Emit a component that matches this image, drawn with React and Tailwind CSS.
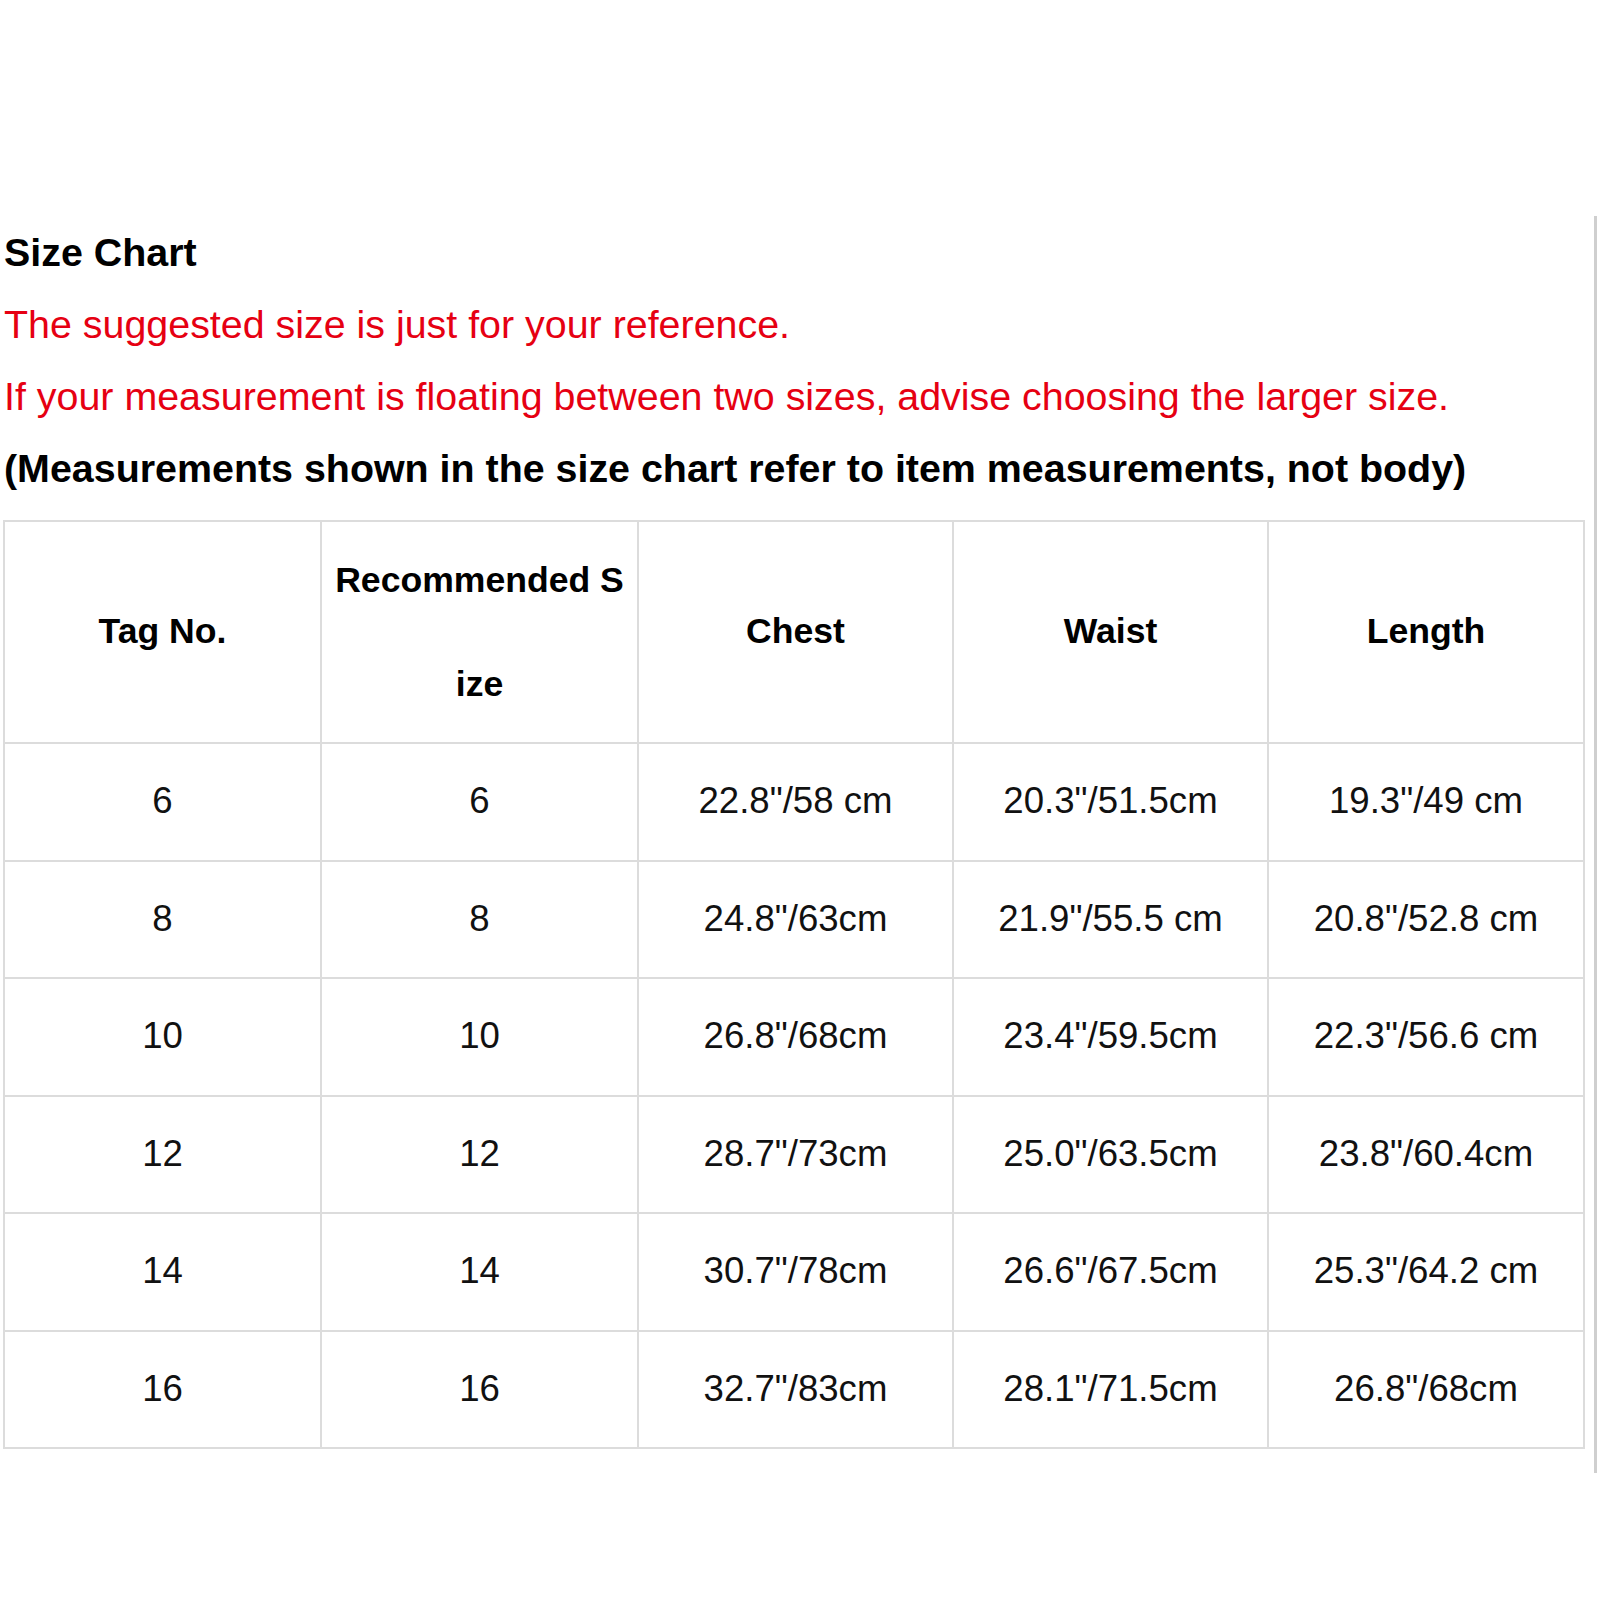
import React from "react";

const rows = [
  ["6", "6", "22.8\"/58 cm", "20.3\"/51.5cm", "19.3\"/49 cm"],
  ["8", "8", "24.8\"/63cm", "21.9\"/55.5 cm", "20.8\"/52.8 cm"],
  ["10", "10", "26.8\"/68cm", "23.4\"/59.5cm", "22.3\"/56.6 cm"],
  ["12", "12", "28.7\"/73cm", "25.0\"/63.5cm", "23.8\"/60.4cm"],
  ["14", "14", "30.7\"/78cm", "26.6\"/67.5cm", "25.3\"/64.2 cm"],
  ["16", "16", "32.7\"/83cm", "28.1\"/71.5cm", "26.8\"/68cm"],
];

export default function App() {
  return (
    <div
      className="w-[1600px] h-[1600px] bg-white text-black overflow-hidden"
      style={{ fontFamily: '"Liberation Sans", Arial, sans-serif' }}
    >
      <div className="mt-[216px] w-[1597px] h-[1257px] border-r-[3px] border-[#cfcfcf]">
        <div className="pl-[4px]">
          <div className="h-[72px] leading-[72px] text-[39.4px] font-bold">Size Chart</div>
          <div className="h-[72px] leading-[72px] text-[39.4px] text-[#e60012]">
            The suggested size is just for your reference.
          </div>
          <div className="h-[72px] leading-[72px] text-[39.4px] text-[#e60012]">
            If your measurement is floating between two sizes, advise choosing the larger size.
          </div>
          <div className="h-[72px] leading-[72px] text-[39.4px] font-bold">
            (Measurements shown in the size chart refer to item measurements, not body)
          </div>
        </div>
        <div className="mt-[16px] ml-[3px] w-[1582px] grid grid-cols-[317px_317px_315px_315px_316px] border-t-2 border-l-2 border-[#dcdcdc]">
          <div className="h-[222px] border-r-2 border-b-2 border-[#dcdcdc] flex items-center justify-center text-[35.6px] font-bold">
            Tag No.
          </div>
          <div className="h-[222px] border-r-2 border-b-2 border-[#dcdcdc] flex flex-col items-center justify-center text-[35.6px] font-bold leading-[104px]">
            <span>Recommended S</span>
            <span>ize</span>
          </div>
          <div className="h-[222px] border-r-2 border-b-2 border-[#dcdcdc] flex items-center justify-center text-[35.6px] font-bold">
            Chest
          </div>
          <div className="h-[222px] border-r-2 border-b-2 border-[#dcdcdc] flex items-center justify-center text-[35.6px] font-bold">
            Waist
          </div>
          <div className="h-[222px] border-r-2 border-b-2 border-[#dcdcdc] flex items-center justify-center text-[35.6px] font-bold">
            Length
          </div>
          {rows.map((r, i) =>
            r.map((c, j) => (
              <div
                key={i + "-" + j}
                className="h-[117.5px] border-r-2 border-b-2 border-[#dcdcdc] flex items-center justify-center text-[36.6px] text-[#111]"
              >
                {c}
              </div>
            ))
          )}
        </div>
      </div>
    </div>
  );
}
